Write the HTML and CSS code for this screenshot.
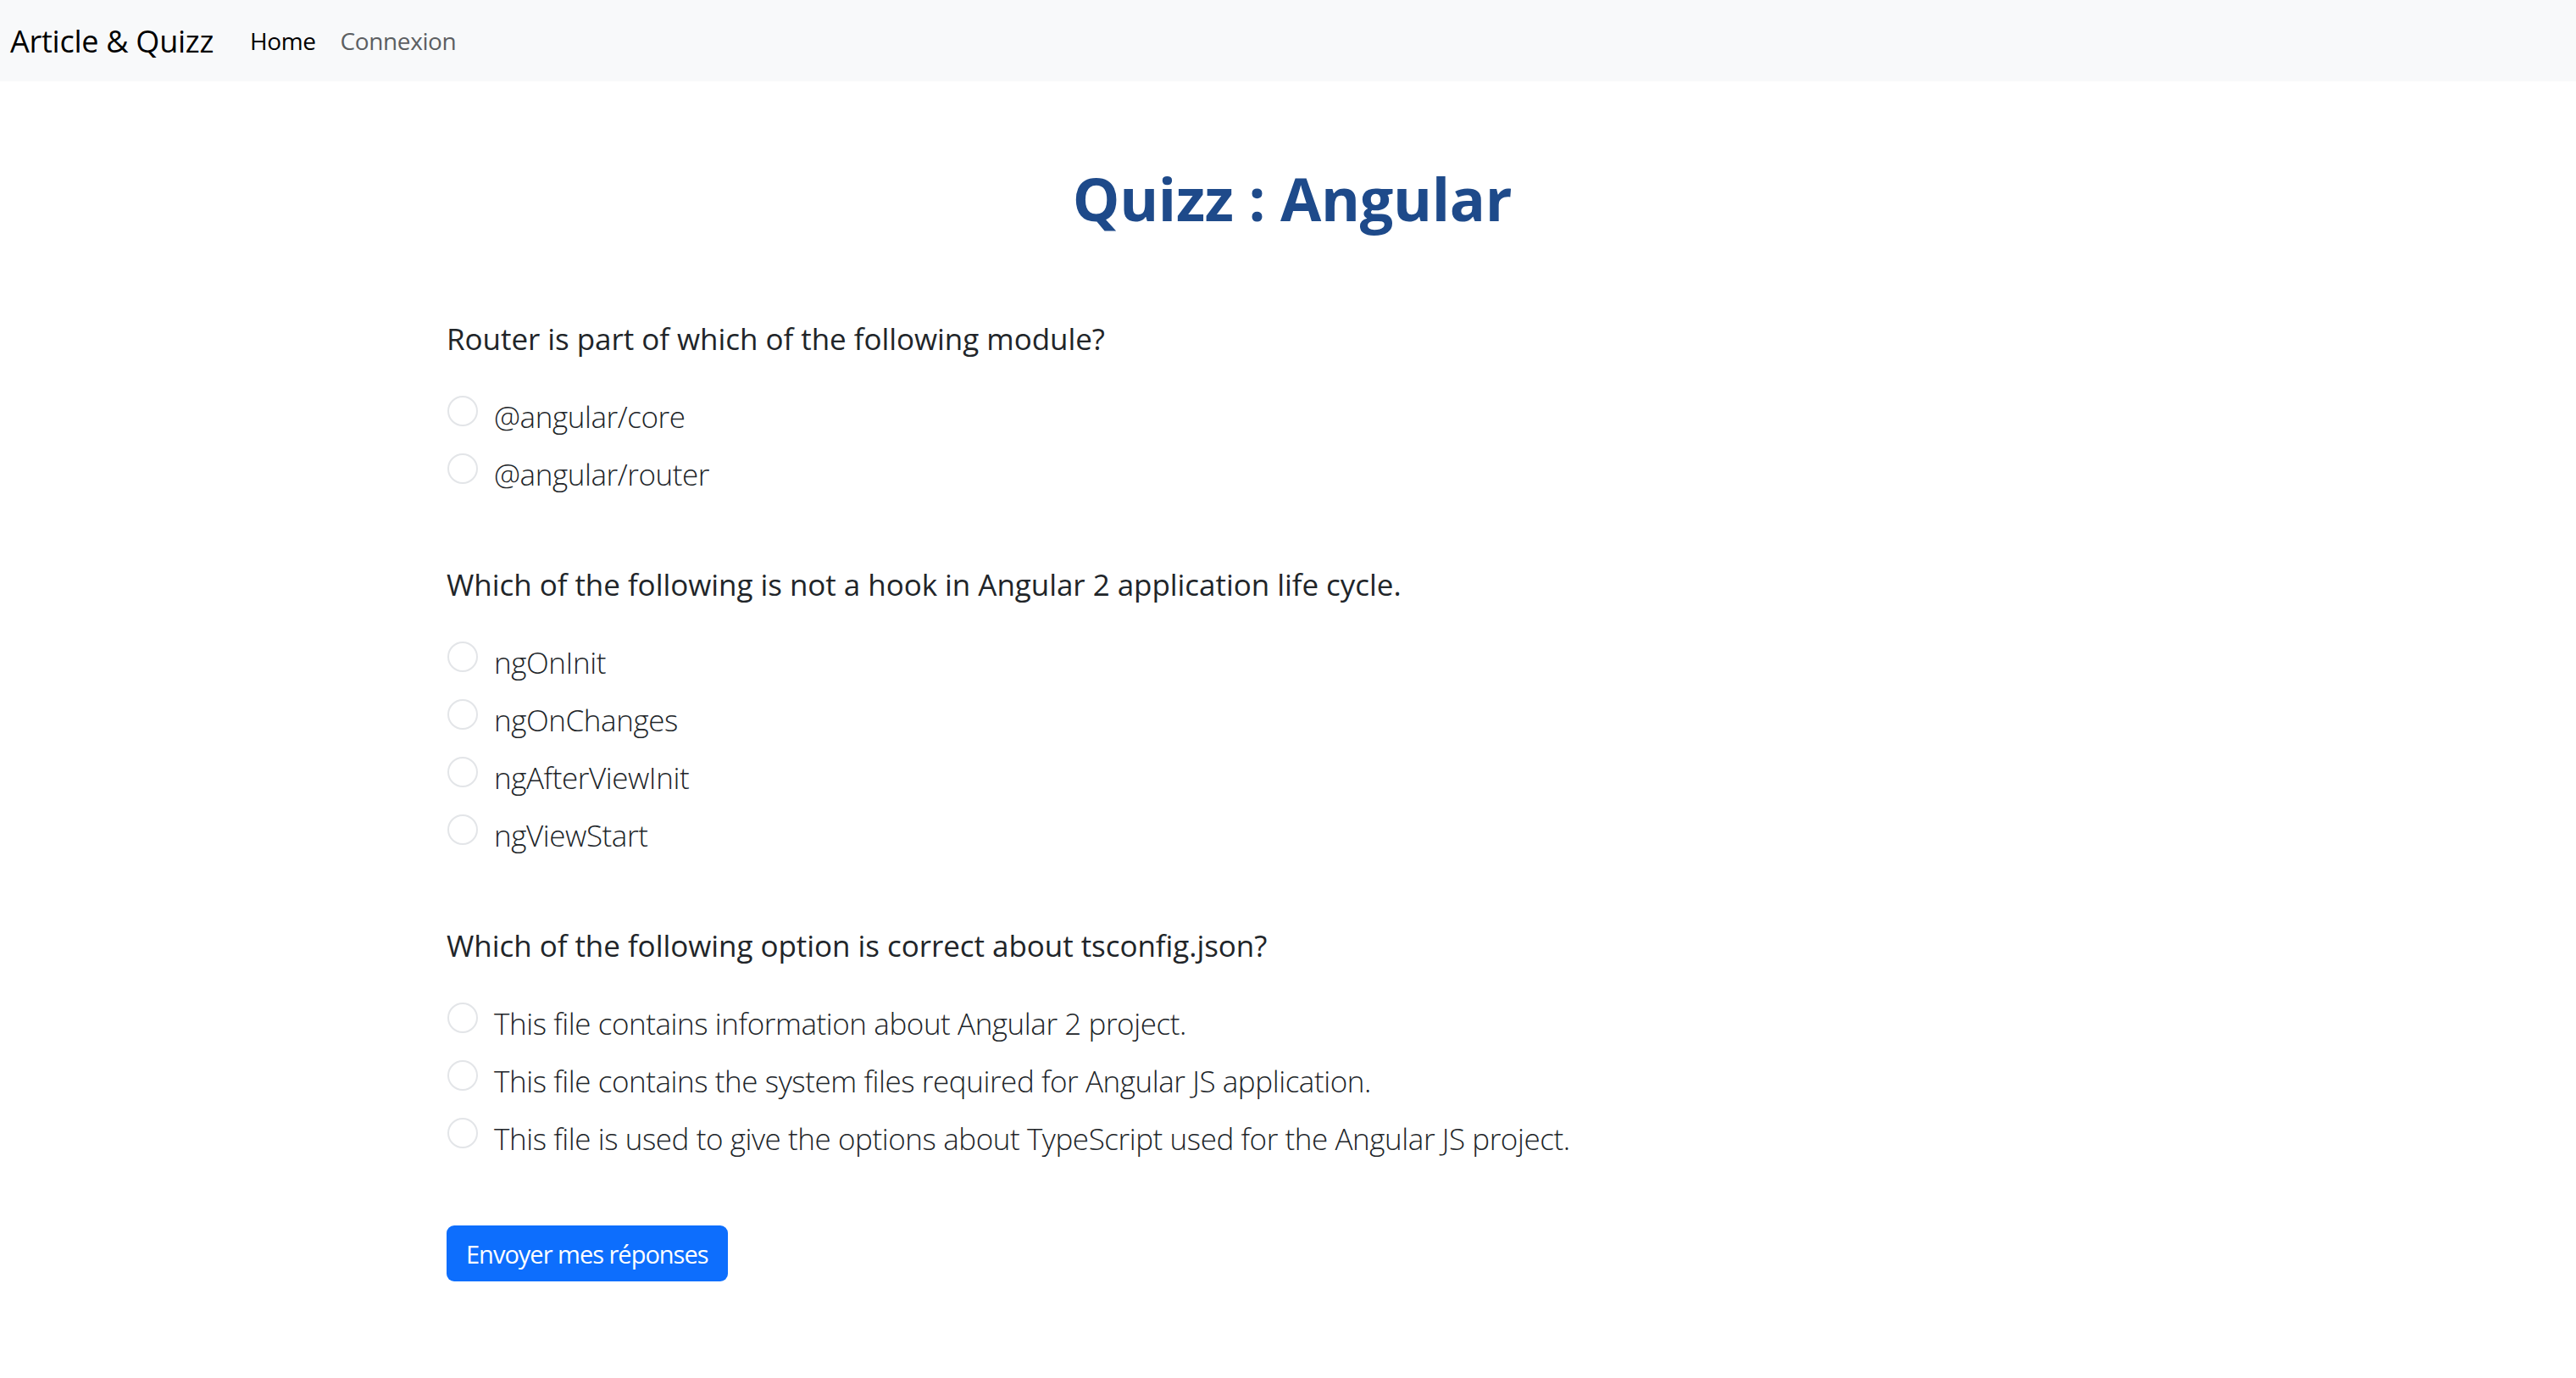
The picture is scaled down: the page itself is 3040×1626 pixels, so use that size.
FILE: index.html
```html
<!DOCTYPE html>
<html lang="fr">
<head>
<meta charset="utf-8">
<title>Quizz : Angular</title>
<link rel="stylesheet" href="styles.css">
</head>
<body>
<nav class="navbar">
  <a class="brand" href="#">Article &amp; Quizz</a>
  <a class="nav-link active" href="#">Home</a>
  <a class="nav-link" href="#">Connexion</a>
</nav>
<main class="container">
  <h1 class="title">Quizz : Angular</h1>
  <form class="quiz">
    <fieldset class="question">
      <legend class="q-text">Router is part of which of the following module?</legend>
      <label class="option"><span class="radio"></span><span class="o-text">@angular/core</span></label>
      <label class="option"><span class="radio"></span><span class="o-text">@angular/router</span></label>
    </fieldset>
    <fieldset class="question">
      <legend class="q-text">Which of the following is not a hook in Angular 2 application life cycle.</legend>
      <label class="option"><span class="radio"></span><span class="o-text">ngOnInit</span></label>
      <label class="option"><span class="radio"></span><span class="o-text">ngOnChanges</span></label>
      <label class="option"><span class="radio"></span><span class="o-text">ngAfterViewInit</span></label>
      <label class="option"><span class="radio"></span><span class="o-text">ngViewStart</span></label>
    </fieldset>
    <fieldset class="question">
      <legend class="q-text">Which of the following option is correct about tsconfig.json?</legend>
      <label class="option"><span class="radio"></span><span class="o-text">This file contains information about Angular 2 project.</span></label>
      <label class="option"><span class="radio"></span><span class="o-text">This file contains the system files required for Angular JS application.</span></label>
      <label class="option"><span class="radio"></span><span class="o-text">This file is used to give the options about TypeScript used for the Angular JS project.</span></label>
    </fieldset>
    <button type="button" class="btn">Envoyer mes réponses</button>
  </form>
</main>
</body>
</html>
```
FILE: styles.css
```css
* { box-sizing: border-box; }
html, body { margin: 0; padding: 0; background: #fff; }
body {
  font-family: "Open Sans", "Noto Sans", "Liberation Sans", sans-serif;
  color: #212529;
}
.navbar {
  height: 96px;
  background: #f8f9fa;
  display: flex;
  align-items: center;
  padding: 0 12px;
}
.navbar a { text-decoration: none; }
.brand {
  font-size: 36px;
  color: #000;
  margin-right: 43px;
  letter-spacing: -0.25px;
}
.nav-link {
  font-size: 28px;
  color: #5c5f62;
  margin-right: 29px;
  letter-spacing: -0.4px;
}
.nav-link.active { color: #000; }

.container {
  max-width: 1986px;
  margin: 0 auto;
  padding-top: 96px;
}
.title {
  margin: 0 0 99px;
  padding-left: 10px;
  text-align: center;
  font-size: 70px;
  line-height: 84px;
  font-weight: 700;
  color: #1e4a8a;
  letter-spacing: -0.3px;
}
.question {
  border: 0;
  margin: 0 0 72px;
  padding: 0;
}
.q-text {
  padding: 0;
  font-size: 35px;
  line-height: 50px;
  margin-bottom: 32px;
  letter-spacing: -0.05px;
}
.option {
  display: flex;
  align-items: center;
  height: 68px;
  cursor: pointer;
}
.radio {
  width: 36px;
  height: 36px;
  border-radius: 50%;
  border: 2px solid #e3e5e8;
  margin: -12px 19px 0 1px;
  flex: none;
}
.o-text {
  font-size: 35px;
  font-weight: 300;
  letter-spacing: -0.43px;
}
.question:last-of-type { margin-bottom: 69px; }
.btn {
  display: block;
  height: 66px;
  padding: 0 23px;
  border: 0;
  border-radius: 9px;
  background: #0d6efd;
  color: #fff;
  font-family: inherit;
  font-size: 29px;
  letter-spacing: -1px;
}
```
